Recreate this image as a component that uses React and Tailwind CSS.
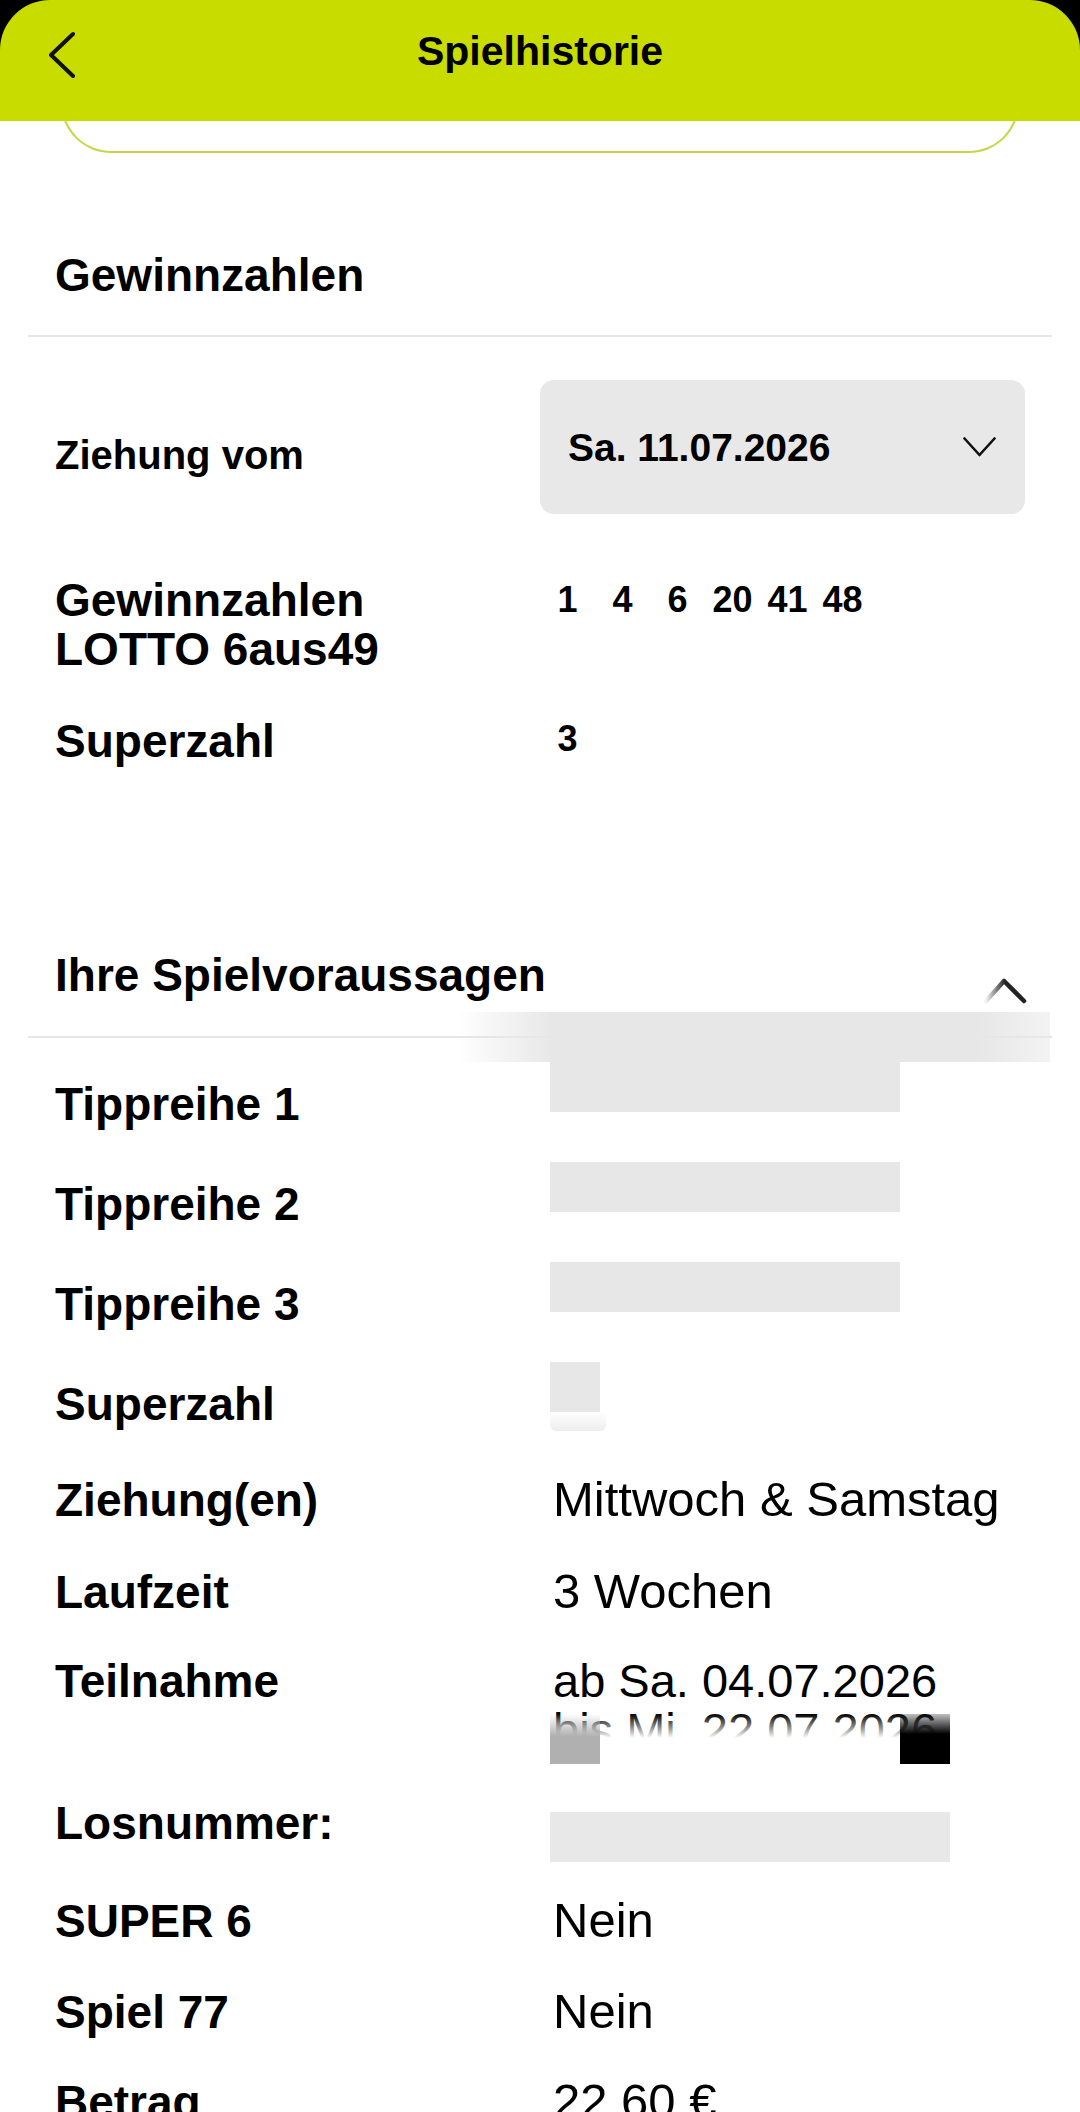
import React from 'react';

const lime = 'bg-[#c9dc00]';

const winning = [1, 4, 6, 20, 41, 48];

function BackIcon() {
  return (
    <svg width="30" height="48" viewBox="0 0 30 48" fill="none" className="block">
      <polyline points="24,3 2,24 24,45" stroke="#111" strokeWidth="4" strokeLinecap="round" strokeLinejoin="round" />
    </svg>
  );
}

function ChevronDown() {
  return (
    <svg width="33" height="20" viewBox="0 0 33 20" fill="none" className="block">
      <polyline points="1.5,1.5 16.5,18 31.5,1.5" stroke="#111" strokeWidth="2.6" strokeLinecap="round" strokeLinejoin="round" />
    </svg>
  );
}

function ChevronUp() {
  return (
    <svg width="44" height="26" viewBox="0 0 44 26" fill="none" className="block">
      <defs>
        <linearGradient id="fadeArm" x1="0" y1="0" x2="1" y2="0">
          <stop offset="0" stopColor="#222" stopOpacity="0.05" />
          <stop offset="0.5" stopColor="#222" stopOpacity="1" />
        </linearGradient>
      </defs>
      <polyline points="3,23 21,3 41,23" stroke="url(#fadeArm)" strokeWidth="4.5" strokeLinecap="round" strokeLinejoin="round" />
    </svg>
  );
}

function TextRow({ label, value, h }) {
  return (
    <div className={`flex items-baseline ${h}`}>
      <span className="w-[495px] shrink-0 text-[46px] font-bold leading-none">{label}</span>
      <span className="pl-[3px] text-[49px] leading-none">{value}</span>
    </div>
  );
}

function BoxRow({ label, h, box }) {
  return (
    <div className={`flex items-start ${h}`}>
      <span className="w-[495px] shrink-0 text-[46px] font-bold leading-none">{label}</span>
      <div className={`-mt-[19px] h-[50px] ${box} bg-[#e7e7e7]`} />
    </div>
  );
}

export default function App() {
  return (
    <div className="w-[1080px] h-[2112px] overflow-hidden bg-white text-black font-['Liberation_Sans',Arial,sans-serif]">
      {/* top bar */}
      <div className="bg-black">
        <header className={`relative z-10 h-[121px] rounded-t-[50px] ${lime} grid grid-cols-[1fr_auto_1fr] pt-[31px]`}>
          <div className="pl-[49px]">
            <BackIcon />
          </div>
          <h1 className="text-[41px] font-bold leading-none">Spielhistorie</h1>
          <div />
        </header>
      </div>

      {/* card edge peeking out below the bar */}
      <div className="mx-[61px] -mt-[50px] h-[82px] rounded-b-[50px] border-2 border-t-0 border-[#c8d54a] bg-white" />

      {/* Gewinnzahlen */}
      <div className="px-[55px]">
        <h2 className="mt-[99px] text-[46px] font-bold leading-none">Gewinnzahlen</h2>
      </div>
      <div className="mx-[28px] mt-[37px] h-[2px] bg-[#e6e6e6]" />

      <div className="px-[55px] mt-[43px] flex items-start justify-between">
        <span className="mt-[55px] text-[40px] font-bold leading-none">Ziehung vom</span>
        <button className="w-[485px] h-[134px] rounded-[14px] bg-[#e8e8e8] flex items-center justify-between pl-[28px] pr-[29px]">
          <span className="text-[39px] font-bold leading-none">Sa. 11.07.2026</span>
          <ChevronDown />
        </button>
      </div>

      <div className="px-[55px] mt-[62px] flex items-start h-[142px]">
        <span className="w-[485px] shrink-0 text-[46px] font-bold leading-[49px]">
          Gewinnzahlen
          <br />
          LOTTO 6aus49
        </span>
        <div className="mt-[6px] flex">
          {winning.map((n) => (
            <span key={n} className="w-[55px] text-center text-[36px] font-bold leading-none">{n}</span>
          ))}
        </div>
      </div>

      <div className="px-[55px] flex items-start h-[234px]">
        <span className="w-[485px] shrink-0 text-[46px] font-bold leading-none">Superzahl</span>
        <span className="mt-[3px] w-[55px] text-center text-[36px] font-bold leading-none">3</span>
      </div>

      {/* Ihre Spielvoraussagen */}
      <div className="relative">
        <div className="h-[46px] pl-[55px] pr-[53px] flex items-start justify-between">
          <h2 className="text-[46px] font-bold leading-none">Ihre Spielvoraussagen</h2>
          <div className="mt-[26px]">
            <ChevronUp />
          </div>
        </div>
        <div className="mx-[28px] mt-[38px] h-[2px] bg-[#e6e6e6]" />
        <div className="absolute left-[458px] top-[60px] w-[592px] h-[50px] bg-[linear-gradient(to_right,rgba(231,231,231,0)_0%,#e7e7e7_16%,#e7e7e7_88%,rgba(231,231,231,0.5)_100%)]" />
      </div>

      <div className="px-[55px] mt-[43px]">
        <BoxRow label="Tippreihe 1" h="h-[100px]" box="w-[350px]" />
        <BoxRow label="Tippreihe 2" h="h-[100px]" box="w-[350px]" />
        <BoxRow label="Tippreihe 3" h="h-[100px]" box="w-[350px]" />

        <div className="flex items-start h-[94px]">
          <span className="w-[495px] shrink-0 text-[46px] font-bold leading-none">Superzahl</span>
          <div className="-mt-[19px] flex flex-col">
            <div className="w-[50px] h-[50px] bg-[#e7e7e7]" />
            <div className="w-[56px] h-[19px] rounded-b-[6px] bg-gradient-to-b from-white to-[#ededed]" />
          </div>
        </div>

        <TextRow label="Ziehung(en)" value="Mittwoch & Samstag" h="h-[92px]" />
        <TextRow label="Laufzeit" value="3 Wochen" h="h-[89px]" />

        <div className="flex items-baseline h-[144px]">
          <span className="w-[495px] shrink-0 text-[46px] font-bold leading-none">Teilnahme</span>
          <div className="text-[47px] leading-[49px]">
            <div className="pl-[3px]">ab Sa. 04.07.2026</div>
            <div className="relative pl-[3px]">
              bis Mi. 22.07.2026
              <div className="absolute left-0 top-[9px] w-[400px] h-[50px] bg-[linear-gradient(to_bottom,rgba(255,255,255,0)_0%,#fff_48%)]" />
              <div className="absolute left-0 top-[9px] w-[50px] h-[50px] bg-[linear-gradient(to_bottom,rgba(176,176,176,0)_0%,#b0b0b0_45%)]" />
              <div className="absolute left-[350px] top-[9px] w-[50px] h-[50px] bg-[linear-gradient(to_bottom,rgba(0,0,0,0.25)_0%,#000_40%)]" />
            </div>
          </div>
        </div>

        <div className="flex items-start h-[96px]">
          <span className="w-[495px] shrink-0 text-[46px] font-bold leading-none">Losnummer:</span>
          <div className="mt-[12px] w-[400px] h-[50px] bg-[#e8e8e8]" />
        </div>

        <TextRow label="SUPER 6" value="Nein" h="h-[91px]" />
        <TextRow label="Spiel 77" value="Nein" h="h-[90px]" />
        <TextRow label="Betrag" value="22,60 €" h="h-[90px]" />
      </div>
    </div>
  );
}
